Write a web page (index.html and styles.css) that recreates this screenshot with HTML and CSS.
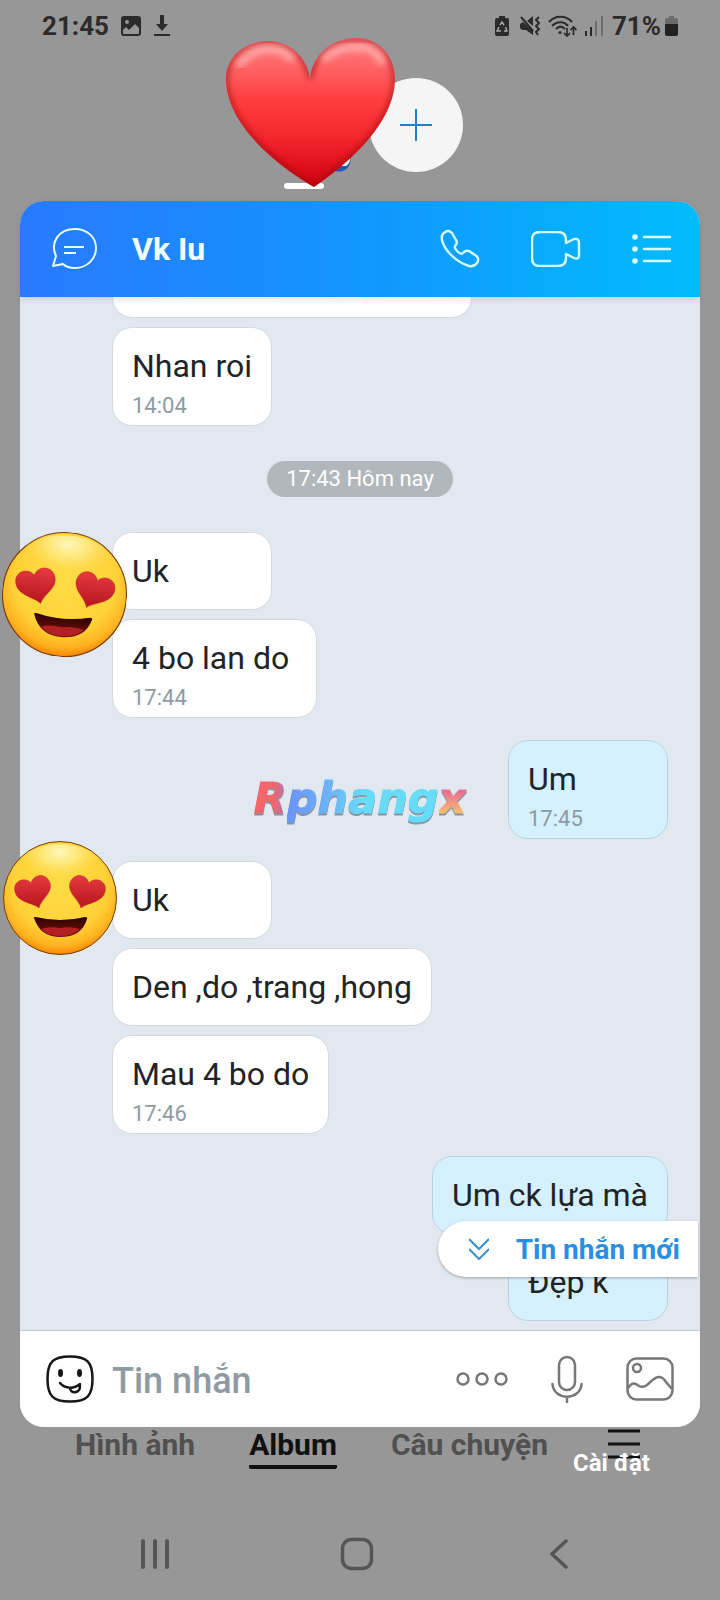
FILE: index.html
```html
<!DOCTYPE html>
<html lang="vi">
<head>
    <meta charset="UTF-8">
    <meta name="viewport" content="width=device-width, initial-scale=1.0">
    <title>Vk Iu</title>
    <link rel="stylesheet" href="styles.css">
</head>
<body>
    <header class="status-bar">
        <span class="status-text">21:45</span>
        <svg class="icon-image" width="20" height="20" viewBox="0 0 20 20">
            <path fill="#2b2b2b" fill-rule="evenodd" d="M3 0h14a3 3 0 0 1 3 3v14a3 3 0 0 1-3 3H3a3 3 0 0 1-3-3V3a3 3 0 0 1 3-3zM2 14v3a1 1 0 0 0 1 1h14a1 1 0 0 0 1-1v-5l-4-4-6 6-3-3zM6 4a2 2 0 1 0 0 4 2 2 0 0 0 0-4z"/>
        </svg>
        <svg class="icon-download" width="16" height="22" viewBox="0 0 16 22" fill="#2b2b2b">
            <path d="M6 0h4v9h4l-6 7-6-7h4zM0 19h16v2H0z"/>
        </svg>
        <div class="status-right">
            <svg width="14" height="20" viewBox="0 0 14 20">
                <path fill="#2b2b2b" d="M4 0h6v2h2a2 2 0 0 1 2 2v14a2 2 0 0 1-2 2H2a2 2 0 0 1-2-2V4a2 2 0 0 1 2-2h2z"/>
                <path fill="none" stroke="#aaa" stroke-width="1.4" d="M5 9l2-3 2 3M10.500 11l1.500 4H9M6 15H2l2-4"/>
            </svg>
            <svg class="icon-mute" width="20" height="20" viewBox="0 0 20 20">
                <path fill="#2b2b2b" d="M0 8l3-2 10 9v4l-7-5H2l-2-2zM7 5l6-5v10z"/>
                <path stroke="#2b2b2b" stroke-width="2" fill="none" d="M1 1l12 14"/>
                <path stroke="#2b2b2b" stroke-width="2" fill="none" d="M19 1l-3 3 3 3-3 3 3 3-3 3 2 3"/>
            </svg>
            <svg class="icon-wifi" width="29" height="22" viewBox="0 0 29 22" fill="none" stroke="#2b2b2b" stroke-width="2.200">
                <path d="M1 7c6-7 17-7 23 0M4 11c5-5 12-5 16 0M8 14c3-3 6-3 9 0"/>
                <path stroke-width="1.700" d="M19 13v8m-3-3l3 3 3-3M25.500 20v-8m-3 3l3-3 3 3"/>
                <circle cx="12" cy="17.500" r="1.500" fill="#2b2b2b" stroke="none"/>
            </svg>
            <svg class="icon-signal" width="18" height="20" viewBox="0 0 18 20">
                <path fill="#2b2b2b" d="M0 15h2v5H0zM5 11h2v9H5z"/>
                <path fill="#6c6c6c" d="M10 5h2v15h-2zM16 0h2v20h-2z"/>
            </svg>
            <span class="status-text">71%</span>
            <svg class="icon-battery" width="13" height="20" viewBox="0 0 13 20">
                <path fill="#6c6c6c" d="M4 0h5v2h2a2 2 0 0 1 2 2v5H0V4a2 2 0 0 1 2-2h2z"/>
                <path fill="#222" d="M0 8h13v10a2 2 0 0 1-2 2H2a2 2 0 0 1-2-2z"/>
            </svg>
        </div>
    </header>

    <section class="chat-heads">
        <div class="head active">
            <svg class="head-badge" width="24" height="24" viewBox="0 0 24 24">
                <circle cx="12" cy="12" r="11.500" fill="#2757b5"/>
                <path fill="#fff" d="M4 4l19 7q0 4-4 7l-8 0z"/>
            </svg>
            <svg class="heart" width="170" height="150" viewBox="0 0 170 150">
                <defs>
                    <linearGradient id="heart-fill" x1="0" y1="0" x2="0" y2="1">
                        <stop offset="0" stop-color="#ff8082"/>
                        <stop offset="0.2" stop-color="#ff6264"/>
                        <stop offset="0.4" stop-color="#ff3f42"/>
                        <stop offset="0.65" stop-color="#f5272f"/>
                        <stop offset="1" stop-color="#cf0010"/>
                    </linearGradient>
                    <filter id="soft" x="-20%" y="-20%" width="140%" height="140%"><feGaussianBlur stdDeviation="3"/></filter>
                    <clipPath id="heart-clip">
                        <path d="M89 149C65 135 5 95 1 45C-1 20 19 3 43 3C66 3 82 20 85 40C88 16 107 0 131 0C154 0 170 17 170 42C169 90 113 133 89 149z"/>
                    </clipPath>
                </defs>
                <g clip-path="url(#heart-clip)">
                    <path fill="url(#heart-fill)" d="M0 0h170v150H0z"/>
                    <path fill="none" stroke="#8a0008" stroke-width="5" opacity="0.6" filter="url(#soft)" d="M89 149C65 135 5 95 1 45C-1 20 19 3 43 3C66 3 82 20 85 40C88 16 107 0 131 0C154 0 170 17 170 42C169 90 113 133 89 149z"/>
                    <path fill="none" stroke="#ffc9c9" stroke-width="8" stroke-linecap="round" opacity="0.6" filter="url(#soft)" d="M15 26Q26 12 42 11T66 20M100 20Q110 10 130 9T156 23"/>
                </g>
            </svg>
        </div>
        <button class="head add" aria-label="Thêm">
            <svg width="32" height="32" viewBox="0 0 32 32" stroke="#1b7fd0" stroke-width="2"><path d="M0 16h32M16 0v32"/></svg>
        </button>
    </section>

    <main class="chat">
        <div class="chat-header">
            <button aria-label="Tin nhắn">
                <svg width="46" height="42" viewBox="0 0 46 42" fill="none" stroke="#e9ffff" stroke-width="2" stroke-linejoin="round">
                    <path d="M4 28C-2 15 6 1 23 1c12 0 21 8 21 19s-9 20-21 20c-5 0-9-1-12-4L1 38zM12 19h20M12 25h12"/>
                </svg>
            </button>
            <h1>Vk Iu</h1>
            <button aria-label="Gọi thoại">
                <svg width="40" height="40" viewBox="0 0 40 40" fill="none" stroke="#d5ffff" stroke-width="2.400" stroke-linejoin="round">
                    <path d="M4 4Q8 0 12 4L16 11Q18 14 15 17Q14 19 17 22Q21 26 23 24Q25 21 29 22L35 26Q40 29 37 34Q34 38 29 37C16 33 4 21 2 11Q1 6 4 4z"/>
                </svg>
            </button>
            <button aria-label="Gọi video">
                <svg width="50" height="36" viewBox="0 0 50 36" fill="none" stroke="#d5ffff" stroke-width="2.400" stroke-linejoin="round">
                    <path d="M9 1h18q8 0 8 8v3l8-4q5-1 5 4v12q0 5-5 3l-8-4v4q0 8-8 8H9q-8 0-8-8V9q0-8 8-8z"/>
                </svg>
            </button>
            <button aria-label="Tùy chọn">
                <svg width="40" height="32" viewBox="0 0 40 32" fill="#d5ffff">
                    <path stroke="#d5ffff" stroke-width="2.400" stroke-linecap="round" d="M12 4h26M12 16h26M12 28h26"/>
                    <circle cx="3" cy="4" r="2.800"/><circle cx="3" cy="16" r="2.800"/><circle cx="3" cy="28" r="2.800"/>
                </svg>
            </button>
        </div>

        <div class="messages">
            <svg class="defs" width="0" height="0">
                <defs>
                    <radialGradient id="skin" cx="0.5" cy="0.38" r="0.64">
                        <stop offset="0" stop-color="#ffdc45"/>
                        <stop offset="0.65" stop-color="#ffd238"/>
                        <stop offset="0.85" stop-color="#ffb320"/>
                        <stop offset="1" stop-color="#f67a00"/>
                    </radialGradient>
                    <radialGradient id="shine" cx="0.5" cy="0.14" r="0.46">
                        <stop offset="0" stop-color="#fffac4" stop-opacity="0.95"/>
                        <stop offset="0.45" stop-color="#fff2a0" stop-opacity="0.6"/>
                        <stop offset="1" stop-color="#ffe060" stop-opacity="0"/>
                    </radialGradient>
                    <linearGradient id="eye" x1="0" y1="0" x2="0" y2="1">
                        <stop offset="0" stop-color="#e63a40"/>
                        <stop offset="1" stop-color="#b5141c"/>
                    </linearGradient>
                    <linearGradient id="mouth" x1="0" y1="0" x2="0" y2="1">
                        <stop offset="0" stop-color="#2e0200"/>
                        <stop offset="1" stop-color="#7c120e"/>
                    </linearGradient>
                    <symbol id="love-face" viewBox="0 0 114 114">
                        <circle cx="57" cy="57" r="56.500" fill="url(#skin)" stroke="#7a3b05" stroke-width="1"/>
                        <ellipse cx="57" cy="32" rx="46" ry="29" fill="url(#shine)"/>
                        <path id="love-eye" fill="url(#eye)" stroke="#c4272c" stroke-width="0.500" d="M36 67C31 62 15 62 12 51C9 40 22 35 28 42C31 32 44 32 47 42C50 52 38 58 36 67z"/>
                        <use href="#love-eye" transform="matrix(-1 0 0 1 114 0)"/>
                        <path fill="url(#mouth)" d="M31 77Q30 76 33 76Q57 82 82 76Q85 76 84 78Q79 96 57 96Q37 96 31 77z"/>
                        <path fill="#b32024" d="M38 88Q46 85 57 87Q68 85 77 88Q70 95 57 95Q45 95 38 88z"/>
                    </symbol>
                </defs>
            </svg>

            <div class="group">
                <div class="bubble cut-top"></div>
                <div class="bubble timed">Nhan roi<time>14:04</time></div>
            </div>

            <div class="day">17:43 Hôm nay</div>

            <div class="group">
                <svg class="face face-big"><use href="#love-face"/></svg>
                <div class="bubble">Uk</div>
                <div class="bubble timed">4 bo lan do&nbsp;<time>17:44</time></div>
            </div>

            <div class="group mine">
                <div class="bubble timed">Um<time>17:45</time></div>
            </div>

            <div class="group">
                <svg class="face"><use href="#love-face"/></svg>
                <div class="bubble">Uk</div>
                <div class="bubble">Den ,do ,trang ,hong</div>
                <div class="bubble timed">Mau 4 bo do<time>17:46</time></div>
            </div>

            <div class="group mine">
                <div class="bubble">Um ck lựa mà</div>
                <div class="bubble">Đẹp k</div>
            </div>

            <div class="watermark"><span class="wm-start">R</span><span class="wm-mid">phang</span><span class="wm-end">x</span></div>

            <button class="new-message">
                <svg width="20" height="22" viewBox="0 0 20 22" fill="none" stroke="#3a8fd0" stroke-width="2"><path d="M0 1l10 10L20 1M0 11l10 10 10-10"/></svg>
                Tin nhắn mới
            </button>
        </div>

        <form class="composer">
            <button type="button" aria-label="Biểu tượng cảm xúc">
                <svg width="48" height="48" viewBox="0 0 48 48" fill="none" stroke="#161616" stroke-width="2.500" stroke-linecap="round">
                    <path d="M24 1.500C41 1.500 46.500 7 46.500 24S41 46.500 24 46.500 1.500 41 1.500 24 7 1.500 24 1.500z"/>
                    <path d="M14 28c5 6 14 6 20 1M24 33c0 6 10 6 10-2"/>
                    <ellipse cx="14.500" cy="18" rx="2.500" ry="4" fill="#161616" stroke="none"/>
                    <ellipse cx="33.500" cy="18" rx="2.500" ry="4" fill="#161616" stroke="none"/>
                </svg>
            </button>
            <input type="text" placeholder="Tin nhắn" aria-label="Tin nhắn">
            <button type="button" aria-label="Thêm">
                <svg width="52" height="14" viewBox="0 0 52 14" fill="none" stroke="#777" stroke-width="2.500"><circle cx="7" cy="7" r="5.500"/><circle cx="26" cy="7" r="5.500"/><circle cx="45" cy="7" r="5.500"/></svg>
            </button>
            <button type="button" aria-label="Ghi âm">
                <svg width="32" height="48" viewBox="0 0 32 48" fill="none" stroke="#777" stroke-width="2.500" stroke-linecap="round">
                    <rect x="8" y="2" width="16" height="33" rx="8"/>
                    <path d="M1.500 29c1 17 28 17 29 0M16 42v5"/>
                </svg>
            </button>
            <button type="button" aria-label="Hình ảnh">
                <svg width="48" height="44" viewBox="0 0 48 44" fill="none" stroke="#777" stroke-width="2.500">
                    <rect x="1.500" y="1.500" width="45" height="41" rx="9"/>
                    <circle cx="11" cy="11" r="4"/>
                    <path d="M2 31c5-7 8-4 11-2q4 2 8-1c4-3 7-8 12-8q4 0 7 5l6 7"/>
                </svg>
            </button>
        </form>
    </main>

    <nav class="tabs">
        <a href="#">Hình ảnh</a>
        <a href="#" class="selected">Album</a>
        <a href="#">Câu chuyện</a>
        <button class="settings">
            <svg width="32" height="31" viewBox="0 0 32 31" stroke="#111" stroke-width="3"><path d="M0 3h32M0 16h32M0 29h32"/></svg>
            <span>Cài đặt</span>
        </button>
    </nav>

    <footer class="nav-bar">
        <button aria-label="Gần đây">
            <svg width="30" height="34" viewBox="0 0 30 34" stroke="#555" stroke-width="4" stroke-linecap="round"><path d="M3 4v26M15 4v26M27 4v26"/></svg>
        </button>
        <button aria-label="Trang chủ">
            <svg width="34" height="34" viewBox="0 0 34 34" fill="none" stroke="#555" stroke-width="3.500"><rect x="2.500" y="2.500" width="29" height="29" rx="9"/></svg>
        </button>
        <button aria-label="Quay lại">
            <svg width="18" height="34" viewBox="0 0 18 34" fill="none" stroke="#555" stroke-width="3.500" stroke-linecap="round"><path d="M16 4L2 17l14 13"/></svg>
        </button>
    </footer>
</body>
</html>
```
FILE: styles.css
```css
:root {
    --backdrop: #979797;
    --feed: #e2e8f0;
    --text: #212427;
    --muted: #8f9ba2;
}

* {
    margin: 0;
    padding: 0;
    box-sizing: border-box;
}

body {
    min-height: 100vh;
    display: flex;
    flex-direction: column;
    background-color: var(--backdrop);
    color: var(--text);
    font-family: Roboto, sans-serif;
    overflow-x: hidden;
}

svg {
    display: block;
    flex-shrink: 0;
}

button {
    border: none;
    background: none;
    font-family: inherit;
    cursor: pointer;
}

/* status bar */
.status-bar {
    height: 52px;
    padding: 0 42px;
    display: flex;
    align-items: center;
}

.status-text {
    font-size: 26px;
    font-weight: 700;
    color: #2b2b2b;
}

.icon-image {
    margin-left: 12px;
}

.icon-download {
    margin-left: 13px;
}

.status-right {
    margin-left: auto;
    display: flex;
    align-items: center;
}

.icon-mute {
    margin-left: 11px;
}

.icon-wifi,
.icon-signal {
    margin-left: 8px;
}

.icon-signal {
    margin-right: 9px;
}

.icon-battery {
    margin-left: 4px;
}

/* chat heads */
.chat-heads {
    height: 149px;
    padding-top: 26px;
    display: flex;
    justify-content: center;
    gap: 18px;
}

.head {
    position: relative;
    width: 94px;
    height: 94px;
    border-radius: 50%;
}

.head.active {
    z-index: 2;
}

.head.active::after {
    content: "";
    position: absolute;
    left: 27px;
    bottom: -17px;
    width: 40px;
    height: 6px;
    border-radius: 3px;
    background-color: white;
}

.head-badge {
    position: absolute;
    right: 0;
    bottom: 0;
}

.heart {
    position: absolute;
    left: -32px;
    top: -40px;
    z-index: 1;
}

.add {
    display: flex;
    align-items: center;
    justify-content: center;
    background-color: #f5f5f5;
}

/* chat window */
.chat {
    margin: 0 20px;
    border-radius: 24px;
    background-color: var(--feed);
}

.chat-header {
    position: relative;
    z-index: 1;
    height: 96px;
    padding: 0 28px 0 32px;
    display: flex;
    align-items: center;
    gap: 51px;
    border-radius: 24px 24px 0 0;
    background: linear-gradient(90deg, #2979ff 0%, #1296ff 50%, #00bcfc 100%);
    box-shadow: 0 2px 6px rgba(0, 60, 120, 0.15);
}

.chat-header h1 {
    flex: 1;
    margin-left: -17px;
    font-size: 32px;
    font-weight: 700;
    color: #f0ffff;
}

.messages {
    position: relative;
    padding-bottom: 9px;
    display: flex;
    flex-direction: column;
    gap: 22px;
}

.defs {
    position: absolute;
}

.group {
    position: relative;
    padding: 0 32px 0 92px;
    display: flex;
    flex-direction: column;
    align-items: flex-start;
    gap: 9px;
}

.group.mine {
    align-items: flex-end;
}

.bubble {
    min-width: 160px;
    padding: 19px;
    border: 1px solid #d5dae0;
    border-radius: 20px;
    background-color: white;
    font-size: 32px;
    line-height: 38px;
}

.mine .bubble {
    border-color: #b9d3e0;
    background-color: #d5f0ff;
}

.bubble.timed {
    padding-bottom: 6px;
}

.bubble time {
    display: block;
    margin-top: 8px;
    font-size: 22px;
    line-height: 26px;
    color: var(--muted);
}

.bubble.cut-top {
    width: 360px;
    height: 21px;
    padding: 0;
    border-top: none;
    border-radius: 0 0 20px 20px;
}

.day {
    align-self: center;
    margin: 13px 0;
    padding: 0 19px;
    border-radius: 18px;
    background-color: #b1b7bb;
    color: white;
    font-size: 22px;
    line-height: 36px;
}

.face {
    position: absolute;
    left: -17px;
    top: -20px;
    width: 114px;
    height: 114px;
}

.face-big {
    left: -18px;
    top: 0;
    width: 125px;
    height: 125px;
    transform: rotate(5deg);
}

.watermark {
    position: absolute;
    left: 50%;
    top: 476px;
    transform: translateX(-50%);
    font-family: "DejaVu Sans", sans-serif;
    font-size: 43px;
    font-weight: 700;
    font-style: italic;
    line-height: 50px;
    filter: drop-shadow(0 2px 0 #8793a0);
}

.watermark span {
    background-clip: text;
    -webkit-background-clip: text;
    -webkit-text-stroke: 1px transparent;
    color: transparent;
}

.wm-start {
    background-image: linear-gradient(90deg, #f4666a 60%, #a878b8);
}

.wm-mid {
    background-image: linear-gradient(90deg, #6b92fa, #6cb6f8 30%, #66dcf8 50%);
}

.wm-end {
    background-image: linear-gradient(180deg, #ea7290 40%, #f4c070 80%);
}

.new-message {
    position: absolute;
    right: 2px;
    bottom: 53px;
    height: 56px;
    padding: 0 18px 0 31px;
    display: flex;
    align-items: center;
    gap: 27px;
    border-radius: 28px 0 0 28px;
    background-color: white;
    box-shadow: 0 1px 3px rgba(0, 0, 0, 0.3);
    color: #2a8fe0;
    font-size: 28px;
    font-weight: 700;
}

.composer {
    position: relative;
    height: 97px;
    padding: 0 26px;
    display: flex;
    align-items: center;
    border-top: 1px solid #c3c9ce;
    border-radius: 0 0 24px 24px;
    background-color: white;
}

.composer input {
    flex: 1;
    min-width: 0;
    margin-left: 18px;
    padding-top: 4px;
    border: none;
    outline: none;
    background: none;
    font-family: inherit;
    font-size: 36px;
    font-weight: 500;
    color: var(--text);
}

.composer input::placeholder {
    color: var(--muted);
    opacity: 1;
}

.composer button + button {
    margin-left: 43px;
}

/* tabs behind the chat window */
.tabs {
    padding: 0 75px;
    display: flex;
    align-items: flex-start;
    gap: 54px;
}

.tabs a {
    height: 42px;
    color: #505050;
    font-size: 30px;
    font-weight: 700;
    line-height: 36px;
    text-decoration: none;
}

.tabs .selected {
    color: #111;
    border-bottom: 4px solid #111;
    border-radius: 2px;
}

.settings {
    position: relative;
    margin-left: 6px;
    padding-top: 1px;
}

.settings span {
    position: absolute;
    right: -10px;
    top: 22px;
    color: white;
    font-size: 24px;
    font-weight: 700;
    line-height: 28px;
    white-space: nowrap;
}

/* system navigation */
.nav-bar {
    margin-top: auto;
    padding: 0 60px 29px 54px;
    display: grid;
    grid-template-columns: repeat(3, 1fr);
    justify-items: center;
}
```
